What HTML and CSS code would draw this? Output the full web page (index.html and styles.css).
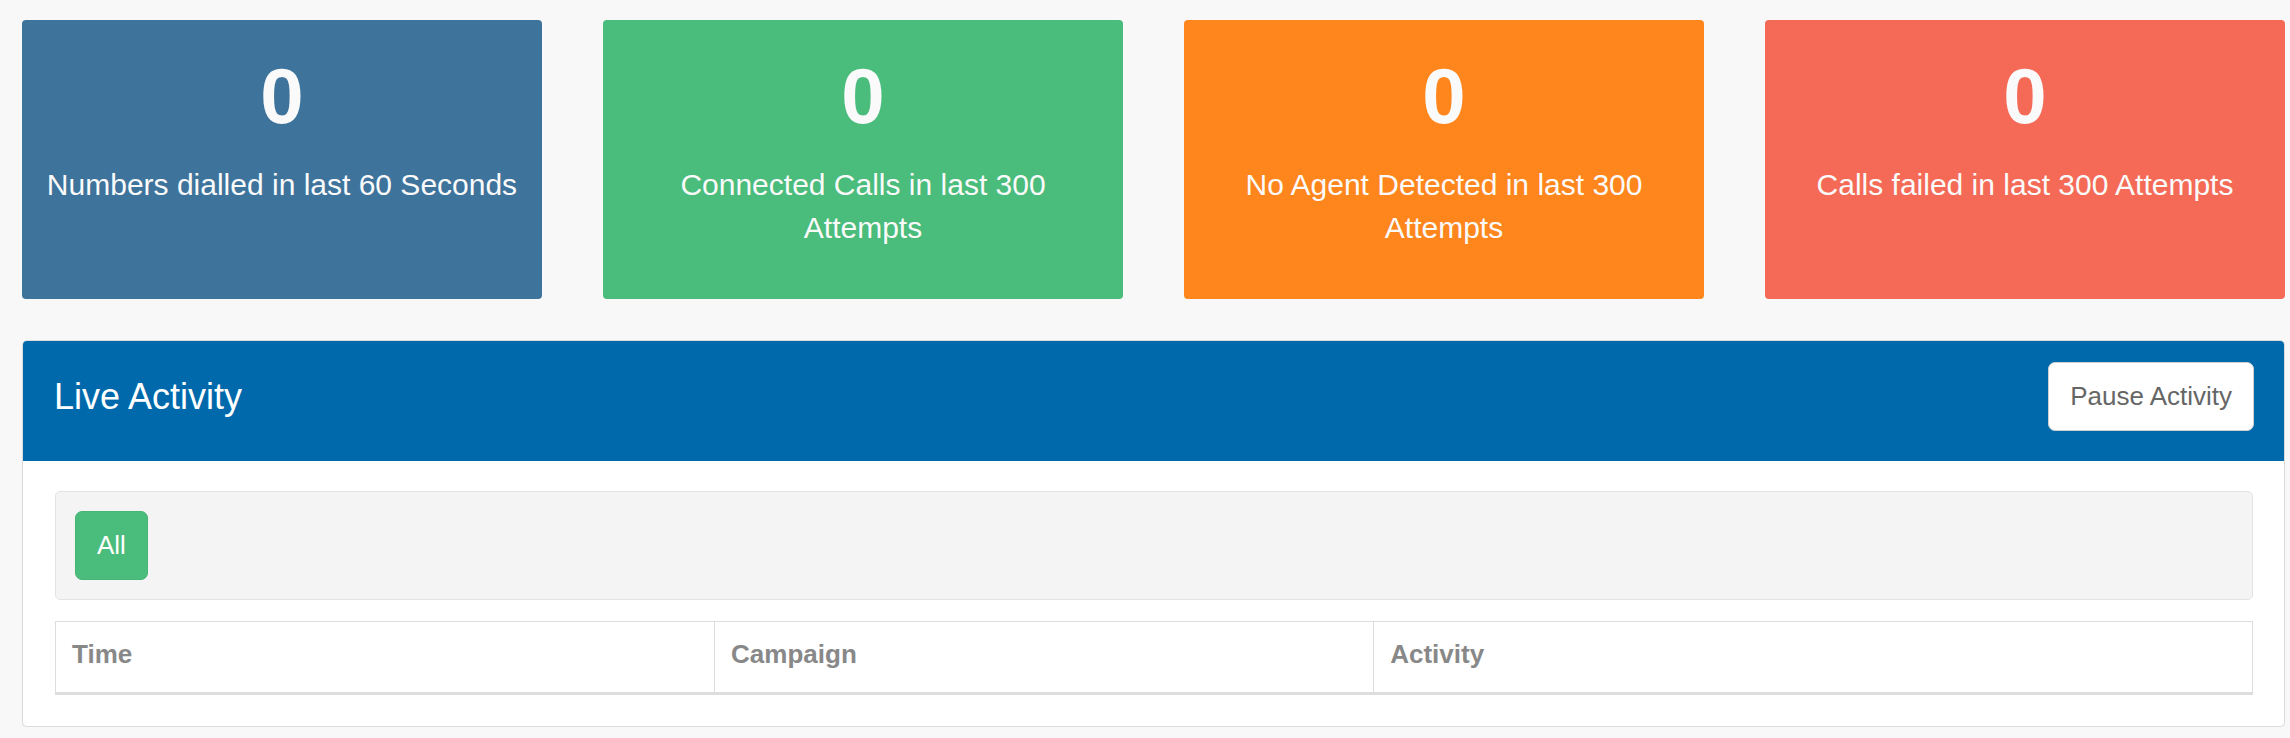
FILE: index.html
```html
<!DOCTYPE html>
<html lang="en">
<head>
<meta charset="utf-8">
<title>Live Activity</title>
<link rel="stylesheet" href="styles.css">
</head>
<body>
<div class="page">
  <div class="stats">
    <div class="stat stat-blue">
      <div class="stat-num">0</div>
      <p class="stat-label">Numbers dialled in last 60 Seconds</p>
    </div>
    <div class="stat stat-green">
      <div class="stat-num">0</div>
      <p class="stat-label">Connected Calls in last 300 Attempts</p>
    </div>
    <div class="stat stat-orange">
      <div class="stat-num">0</div>
      <p class="stat-label">No Agent Detected in last 300 Attempts</p>
    </div>
    <div class="stat stat-red">
      <div class="stat-num">0</div>
      <p class="stat-label">Calls failed in last 300 Attempts</p>
    </div>
  </div>

  <section class="panel">
    <header class="panel-head">
      <h2 class="panel-title">Live Activity</h2>
      <button class="btn btn-default" type="button">Pause Activity</button>
    </header>
    <div class="panel-body">
      <div class="well">
        <button class="btn btn-success" type="button">All</button>
      </div>
      <table class="table">
        <thead>
          <tr>
            <th class="col-time">Time</th>
            <th class="col-campaign">Campaign</th>
            <th class="col-activity">Activity</th>
          </tr>
        </thead>
        <tbody></tbody>
      </table>
    </div>
  </section>
</div>
</body>
</html>
```

FILE: styles.css
```css
html, body {
  margin: 0;
  padding: 0;
  background: #f8f8f8;
  font-family: "Liberation Sans", Arial, Helvetica, sans-serif;
}

.page {
  padding: 20px 5px 0 22px;
}

.stats {
  display: grid;
  grid-template-columns: repeat(4, 1fr);
  column-gap: 61px;
}

.stat {
  height: 279px;
  box-sizing: border-box;
  border-radius: 4px;
  padding: 37px 20px 0;
  text-align: center;
  color: #fafafa;
}

.stat-blue { background: #3e739c; }
.stat-green { background: #4abc7b; }
.stat-orange { background: #fe861c; }
.stat-red { background: #f46a56; }

.stat-num {
  font-size: 78px;
  font-weight: bold;
  line-height: 1;
  margin-bottom: 29px;
}

.stat-label {
  margin: 0;
  font-size: 30px;
  line-height: 1.428571;
}

.panel {
  margin-top: 41px;
  border: 1px solid #dcdcdc;
  border-radius: 5px;
  background: #fff;
  box-shadow: 0 1px 2px rgba(0, 0, 0, 0.06);
  overflow: hidden;
}

.panel-head {
  display: flex;
  align-items: center;
  justify-content: space-between;
  background: #0069ac;
  padding: 21px 30px 30px 31px;
}

.panel-title {
  margin: 0;
  color: #fff;
  font-size: 36px;
  font-weight: normal;
  line-height: 1.1;
}

.btn {
  font-family: "Liberation Sans", Arial, Helvetica, sans-serif;
  font-size: 26px;
  line-height: 37px;
  padding: 15px 21px;
  border: 1px solid transparent;
  border-radius: 7px;
  cursor: pointer;
}

.btn-default {
  background: #fff;
  color: #666;
  border-color: #cfcfcf;
}

.btn-success {
  background: #4abc7b;
  color: #fff;
  border-color: #46b575;
}

.panel-body {
  padding: 30px 31px 31px 32px;
}

.well {
  background: #f4f4f4;
  border: 1px solid #e3e3e3;
  border-radius: 5px;
  padding: 19px;
  margin-bottom: 21px;
}

.table {
  width: 100%;
  border-collapse: collapse;
  border: 1px solid #dddddd;
}

.table th {
  text-align: left;
  color: #888;
  font-size: 26px;
  font-weight: bold;
  line-height: 37px;
  padding: 14px 16px 19px;
  border: 1px solid #dddddd;
  border-bottom: 3px solid #dddddd;
}

.col-time { width: 30%; }
.col-campaign { width: 30%; }
.col-activity { width: 40%; }
```
